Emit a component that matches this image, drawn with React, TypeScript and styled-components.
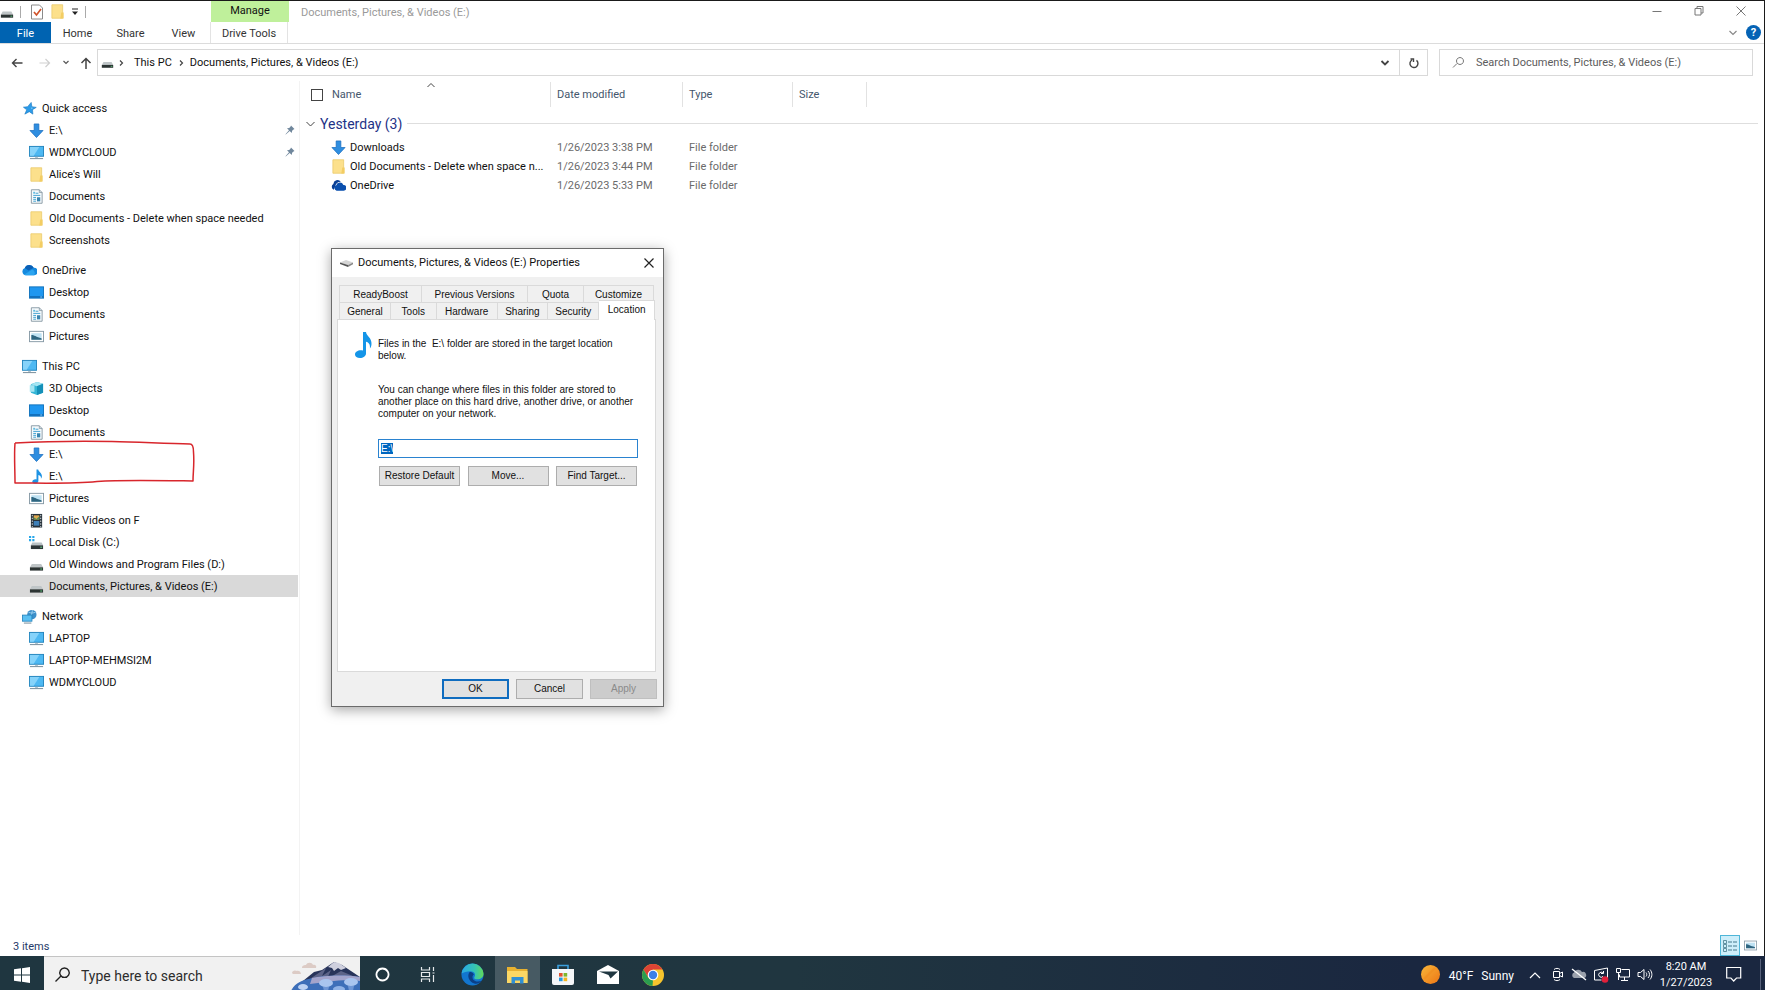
import React, { useEffect, useRef } from "react";
import styled, { createGlobalStyle, css } from "styled-components";

const GlobalStyle = createGlobalStyle`
  *, *::before, *::after { box-sizing: border-box; }
  html, body { margin: 0; height: 100%; }
  body { background: #fff; font: 11px/16px Roboto, "Open Sans", sans-serif; color: #111; overflow: hidden; }
  button, input { font: inherit; color: inherit; margin: 0; }
  button { border: 0; padding: 0; background: none; cursor: default; }
  svg { display: block; flex: none; }
  a { color: inherit; text-decoration: none; cursor: default; }
`;

/* ---------- icons ---------- */

type IconName =
  | "star" | "down" | "pc" | "folder" | "doc" | "cloud" | "cloudDark" | "desktop" | "picture"
  | "cube" | "note" | "film" | "osdrive" | "drive" | "network";

const shapes: Record<IconName, React.ReactNode> = {
  star: (
    <>
      <path d="M9.800 1.500 10.500 6l4.700.8-4 2.400.4 4.800-3.800-2.600L3 14l2-4.600-3.500-2.800 4.500-.6z" fill="#2c9be8" stroke="#1273bd" strokeWidth=".6" />
      <path d="m9 4.500.6 2.500 2.700.5-2.500 1z" fill="#7cc8f7" />
    </>
  ),
  down: <path d="M5.500 1h5v7H15l-7 7.500L1 8h4.500z" fill="#2f8ee0" stroke="#1c6fc0" strokeWidth=".8" />,
  pc: (
    <>
      <rect x=".5" y="1.500" width="15" height="10.500" fill="#4db8f2" stroke="#2384bd" />
      <path d="M1 2h10L5 11.500H1z" fill="#86d3fa" />
      <path d="M6.500 12.500h3v1h-3z" fill="#8aa7b8" />
      <path d="M1 14.500h14" stroke="#6f8593" />
    </>
  ),
  folder: (
    <>
      <path d="M2 .8h11.500v14.400H2z" fill="#fce08c" stroke="#e9c868" strokeWidth=".8" />
      <path d="M12 9h2.500v6.500H11z" fill="#f3cd63" />
    </>
  ),
  doc: (
    <>
      <path d="M2.500.8h8.500l3 3v11.400H2.500z" fill="#f6fafc" stroke="#7c8f9b" strokeWidth=".9" />
      <path d="M11 .8v3h3" fill="none" stroke="#7c8f9b" strokeWidth=".8" />
      <path d="M7 4.500h3M4.500 6.800h7.500M4.500 9h3M4.500 11h3M4.500 13h3" stroke="#3a9fd0" />
      <path d="M8.500 8.800h3.500v4.400H8.500z" fill="#3a85b0" />
      <path d="M4.500 3h2v2h-2z" fill="#5fbbe0" />
    </>
  ),
  cloud: (
    <>
      <path d="M4 13a4 4 0 0 1-1-7.700A5.200 5.200 0 0 1 12.500 5a4 4 0 0 1 .5 8z" fill="#1589de" />
      <path d="M3 5.300A5.200 5.200 0 0 1 12.500 5L7 8z" fill="#0b5fb5" />
      <path d="M2 12.500 11 7a4 4 0 0 1 2 6H4z" fill="#2ba4ef" />
    </>
  ),
  cloudDark: (
    <>
      <path d="M3 12.500A3.300 3.300 0 0 1 2.500 6.500 4.500 4.500 0 0 1 10.500 4 6 6 0 0 0 4.500 9z" fill="#0a3f95" />
      <path d="M6 13.500a3 3 0 0 1-.4-5.700 4 4 0 0 1 7.600-.3 3 3 0 0 1 .3 6z" fill="#0a4fae" />
    </>
  ),
  desktop: (
    <>
      <rect x=".5" y="2" width="15" height="12" fill="#1f97f0" stroke="#1273bd" />
      <path d="M1 12h14v1.500H1z" fill="#0f65ad" />
      <path d="M12 12.300h2v1h-2z" fill="#8fd0ff" />
    </>
  ),
  picture: (
    <>
      <rect x=".5" y="2.500" width="15" height="11" fill="#fff" stroke="#8699a5" />
      <path d="M2.500 4.500h11v7h-11z" fill="#bfe2f3" />
      <path d="M2.500 11.500v-5c3 0 5 2 11 3.500v1.500z" fill="#2e6580" />
    </>
  ),
  cube: (
    <>
      <path d="M2 3.500 8.500 1 15 3v9.500L8.500 15 2 12.500z" fill="#35b6d6" />
      <path d="M2 3.500 8.500 1 15 3 8.500 5.500z" fill="#a5e5f2" />
      <path d="M8.500 5.500 15 3v9.500L8.500 15z" fill="#1590b8" />
      <path d="M.8 4.500h5v7h-5z" fill="#a5e5f2" />
    </>
  ),
  note: <path d="M8 .5h1.800c.3 2.600 4.200 3.600 4 7.500-.1 1-.6 1.800-1.100 2.400.5-2.300-.7-3.700-2.700-4.100v6.400c0 1.600-1.700 2.800-3.700 2.800-1.700 0-2.800-.8-2.800-2 0-1.500 1.600-2.600 3.400-2.600.4 0 .8 0 1.100.2z" fill="#1e93e4" />,
  film: (
    <>
      <path d="M2 1h12v14.500H2z" fill="#26313a" />
      <path d="M5 2.500h6V7H5z" fill="#e0a94f" />
      <path d="M5 8.500h6v5H5z" fill="#3d7fb8" />
      <path d="M5 7V4.500l3 2 3-3V7z" fill="#4f8c56" />
      <path d="M3.500 2v13M12.500 2v13" stroke="#dfe6ea" strokeDasharray="1.500 1.500" />
    </>
  ),
  osdrive: (
    <>
      <path d="M0 1h2.300v2.300H0zM3.500 1h2.300v2.300H3.500zM0 4.300h2.300v2.300H0zM3.500 4.300h2.300v2.300H3.500z" fill="#27a7ea" />
      <path d="M3.500 8h10l1.500 3H2z" fill="#b9c1c5" />
      <path d="M2 11h13v4H2z" fill="#2d3538" />
      <path d="M12 13h2" stroke="#6be08b" />
    </>
  ),
  drive: (
    <>
      <path d="M3 7.500h10L15 11H1z" fill="#bfc5c7" />
      <path d="M1 11h14v3.500H1z" fill="#2c3433" />
      <path d="M12 12.800h2" stroke="#5fd07f" />
    </>
  ),
  network: (
    <>
      <circle cx="10.500" cy="6" r="5" fill="#3d8fc9" />
      <path d="M7 3.500c3 1 5 1 7.500-.2M8 9.500c2-3 3-5 3-8.300" stroke="#a4d6f2" strokeWidth=".9" fill="none" />
      <rect x=".6" y="6.500" width="10" height="6.500" fill="#59bff2" stroke="#2384bd" strokeWidth=".9" />
      <path d="M2 15h8" stroke="#6f8593" />
    </>
  ),
};

const Icon = ({ name, size = 15 }: { name: IconName; size?: number }) => (
  <svg width={size} height={size} viewBox="0 0 16 16" aria-hidden="true">{shapes[name]}</svg>
);

const Stroke = ({ d, w = 12, h = 12, color = "#444", width = 1.2 }: { d: string; w?: number; h?: number; color?: string; width?: number }) => (
  <svg width={w} height={h} viewBox={`0 0 ${w} ${h}`} fill="none" stroke={color} strokeWidth={width} aria-hidden="true">
    <path d={d} />
  </svg>
);

const Pin = () => (
  <svg width="10" height="10" viewBox="0 0 10 10" aria-label="Pinned">
    <path d="M6 .5 9.500 4l-1 .4-1.400 1.400-.3 2.200L4.700 6 .8 9.500.5 9.200 4 5.300 2 3.200l2.200-.3L5.600 1.500z" fill="#70879c" />
  </svg>
);

/* ---------- window frame ---------- */

const Screen = styled.div`
  height: 100vh;
  display: flex;
  flex-direction: column;
`;

const ExplorerWindow = styled.main`
  position: relative;
  flex: 1;
  min-height: 0;
  display: flex;
  flex-direction: column;
  border-top: 1px solid #1a1a1a;
  border-right: 1px solid #1a1a1a;
`;

const TitleBar = styled.header`
  display: flex;
  height: 21px;
`;

const QuickTools = styled.div`
  width: 211px;
  display: flex;
  align-items: center;
  gap: 6px;
`;

const Divider = styled.span`
  width: 1px;
  height: 12px;
  background: #aaa;
`;

const QuickIcon = styled.svg`
  margin-left: 3px;
`;

const ContextTab = styled.div`
  width: 78px;
  background: #bff09b;
  text-align: center;
  line-height: 20px;
`;

const WindowTitle = styled.h1`
  flex: 1;
  margin: 0 0 0 12px;
  font: inherit;
  line-height: 23px;
  color: #9a9a9a;
`;

const CaptionButtons = styled.div`
  display: flex;
  padding: 0 2px 2px 0;
`;

const CaptionButton = styled.button`
  width: 42px;
  display: flex;
  align-items: center;
  justify-content: center;
`;

const Ribbon = styled.nav`
  display: flex;
  height: 22px;
  border-bottom: 1px solid #dcdcdc;
`;

const RibbonTab = styled.button<{ $kind?: "file" | "context" }>`
  width: 53px;
  padding-top: 2px;
  line-height: 19px;
  color: #333;
  ${({ $kind }) => $kind === "file" && css`
    width: 51px;
    color: #fff;
    background: #0063b1;
  `}
  ${({ $kind }) => $kind === "context" && css`
    width: 78px;
    border: solid #e3e3e3;
    border-width: 0 1px;
  `}
`;

const RibbonEnd = styled.div`
  margin-left: auto;
  display: flex;
  align-items: center;
  gap: 7px;
  padding-right: 3px;
`;

const HelpButton = styled.button`
  width: 15px;
  height: 15px;
  border-radius: 50%;
  background: #0563b5;
  color: #fff;
  font-weight: 700;
  line-height: 15px;
`;

const AddressRow = styled.div`
  display: flex;
  align-items: center;
  height: 37px;
  padding-right: 11px;
`;

const NavButton = styled.button<{ $w: number }>`
  width: ${({ $w }) => $w}px;
  height: 26px;
  display: flex;
  align-items: center;
  justify-content: center;
`;

const AddressBox = styled.div`
  flex: 1;
  display: flex;
  align-items: center;
  height: 27px;
  border: 1px solid #d9d9d9;
  margin-left: 2px;
  padding-left: 3px;
`;

const Crumb = styled.a`
  padding: 0 6px;
`;

const AddressButton = styled.button<{ $edge?: boolean }>`
  width: 28px;
  height: 100%;
  display: flex;
  align-items: center;
  justify-content: center;
  ${({ $edge }) => $edge && css`border-left: 1px solid #d9d9d9;`}
`;

const Spacer = styled.span`
  flex: 1;
`;

const SearchBox = styled.label`
  width: 314px;
  height: 27px;
  margin-left: 11px;
  padding-left: 12px;
  display: flex;
  align-items: center;
  gap: 11px;
  border: 1px solid #d9d9d9;
`;

const SearchInput = styled.input`
  flex: 1;
  min-width: 0;
  border: 0;
  padding: 0;
  outline: 0;
  background: none;
  &::placeholder { color: #5c5c5c; opacity: 1; }
`;

/* ---------- body ---------- */

const Body = styled.div`
  flex: 1;
  min-height: 0;
  display: flex;
`;

const Sidebar = styled.nav`
  position: relative;
  width: 300px;
  padding-top: 16px;
  border-right: 1px solid #f3f3f3;
`;

const TreeGroup = styled.section`
  margin-bottom: 8px;
`;

const TreeItem = styled.a<{ $root?: boolean; $selected?: boolean }>`
  display: flex;
  align-items: center;
  gap: 5px;
  height: 22px;
  margin-right: 1px;
  padding: 0 3px 0 ${({ $root }) => ($root ? 22 : 29)}px;
  background: ${({ $selected }) => ($selected ? "#d9d9d9" : "transparent")};
  white-space: nowrap;
`;

const TreeLabel = styled.span`
  flex: 1;
  padding-top: 2px;
`;

const Annotation = styled.svg`
  position: absolute;
  left: 12px;
  top: 358px;
  pointer-events: none;
`;

const FilePane = styled.section`
  flex: 1;
  min-width: 0;
  padding-right: 6px;
`;

const FileTable = styled.table`
  width: 100%;
  table-layout: fixed;
  border-collapse: collapse;
`;

const HeadCell = styled.th`
  position: relative;
  height: 28px;
  padding: 0 0 0 6px;
  text-align: left;
  font-weight: 400;
  color: #44566c;
  &::after {
    content: "";
    position: absolute;
    top: 1px;
    right: 0;
    height: 25px;
    border-right: 1px solid #e2e2e2;
  }
  &:first-child { padding-left: 11px; }
  &:last-child::after { display: none; }
`;

const CheckLabel = styled.label`
  display: flex;
  align-items: center;
  gap: 9px;
`;

const CheckBox = styled.input`
  appearance: none;
  width: 12px;
  height: 12px;
  border: 1px solid #444;
  background: #fff;
`;

const SortMark = styled.span`
  position: absolute;
  left: 127px;
  top: 1px;
`;

const GroupHead = styled.h2`
  display: flex;
  align-items: center;
  gap: 5px;
  height: 29px;
  margin: 0;
  padding-left: 6px;
  font: inherit;
  font-size: 14px;
  color: #1e3287;
  white-space: nowrap;
  &::after {
    content: "";
    flex: 1;
    border-top: 1px solid #dedede;
  }
`;

const PlainCell = styled.td`
  padding: 0;
`;

const Cell = styled.td`
  height: 19px;
  padding: 0 0 0 6px;
  color: #6a6a6a;
  white-space: nowrap;
`;

const NameCell = styled.div`
  display: flex;
  align-items: center;
  gap: 4px;
  padding-left: 25px;
  color: #111;
`;

const StatusBar = styled.footer`
  display: flex;
  align-items: stretch;
  height: 21px;
  padding: 0 4px 0 13px;
  color: #1f3a68;
  line-height: 23px;
`;

const ViewButton = styled.button<{ $on?: boolean }>`
  width: 20px;
  display: flex;
  align-items: center;
  justify-content: center;
  ${({ $on }) => $on && css`
    background: #cdeefa;
    border: 1px solid #4fb6d8;
  `}
`;

/* ---------- properties dialog ---------- */

const Dialog = styled.section`
  position: absolute;
  left: 331px;
  top: 247px;
  width: 333px;
  height: 459px;
  display: flex;
  flex-direction: column;
  border: 1px solid #6b6b6b;
  background: #f0f0f0;
  box-shadow: 0 3px 12px rgba(0, 0, 0, 0.35);
  font: 10px/12px "Liberation Sans", Arial, sans-serif;
`;

const DialogTitle = styled.header`
  display: flex;
  align-items: center;
  gap: 5px;
  height: 28px;
  padding: 0 8px;
  background: #fff;
  font: 11px/16px Roboto, "Open Sans", sans-serif;
`;

const DialogBody = styled.div`
  flex: 1;
  display: flex;
  flex-direction: column;
  padding: 8px 6px 7px 5px;
`;

const TabRow = styled.div`
  display: flex;
  height: 17px;
  padding: 0 2px;
`;

const DialogTab = styled.button<{ $w: number; $active?: boolean }>`
  width: ${({ $w }) => $w}px;
  padding-top: 2px;
  border: 1px solid #dadada;
  border-width: 1px 1px 0 0;
  &:first-child { border-left-width: 1px; }
  ${({ $active }) => $active && css`
    position: relative;
    height: 20px;
    margin-top: -2px;
    padding-bottom: 3px;
    background: #fff;
    z-index: 1;
  `}
`;

const TabPanel = styled.div`
  flex: 1;
  margin-right: 1px;
  padding: 12px 17px;
  border: 1px solid #dadada;
  background: #fff;
`;

const Intro = styled.div`
  display: flex;
  gap: 6px;
  margin-bottom: 22px;
`;

const Copy = styled.p`
  margin: 0;
`;

const IntroCopy = styled(Copy)`
  padding-top: 6px;
`;

const Indented = styled.div`
  padding-left: 23px;
`;

const PathInput = styled.input`
  width: 100%;
  height: 19px;
  margin: 19px 0 8px;
  padding: 0 2px;
  display: block;
  border: 1px solid #2a83d0;
  outline: 0;
  &::selection { background: #0067c0; color: #fff; }
`;

const ButtonRow = styled.div`
  display: flex;
  justify-content: space-between;
  padding: 0 1px;
`;

const FooterRow = styled.div`
  display: flex;
  justify-content: flex-end;
  gap: 7px;
  padding-top: 7px;
`;

const PushButton = styled.button<{ $w: number; $primary?: boolean }>`
  width: ${({ $w }) => $w}px;
  height: 20px;
  background: #e1e1e1;
  border: ${({ $primary }) => ($primary ? "2px solid #0f6cbf" : "1px solid #adadad")};
  &:disabled { background: #cccccc; border-color: #bfbfbf; color: #8a8a8a; }
`;

/* ---------- taskbar ---------- */

const Taskbar = styled.footer`
  display: flex;
  height: 34px;
  background: linear-gradient(90deg, #1f3640, #203640 45%, #1a2740 80%);
  color: #fff;
`;

const TaskButton = styled.button<{ $w?: number; $active?: boolean }>`
  width: ${({ $w = 45 }) => $w}px;
  padding-top: 3px;
  display: flex;
  align-items: center;
  justify-content: center;
  background: ${({ $active }) => ($active ? "#475a63" : "none")};
`;

const TaskSearch = styled.label`
  width: 316px;
  display: flex;
  align-items: center;
  gap: 10px;
  padding: 3px 0 0 11px;
  background: #f1f1f1;
  border-top: 1px solid #c4c4c4;
  color: #222;
  font-size: 14px;
  line-height: 20px;
`;

const TaskSearchInput = styled(SearchInput)`
  padding-top: 2px;
  &::placeholder { color: #2c2c2c; }
`;

const Tray = styled.div`
  margin-left: auto;
  padding-top: 3px;
  display: flex;
  align-items: center;
`;

const Weather = styled.button`
  display: flex;
  align-items: center;
  gap: 8px;
  margin-right: 10px;
  font-size: 12px;
  & > span { padding-top: 2px; }
`;

const WeatherIcon = styled.svg`
  margin-right: 1px;
`;

const TrayButton = styled.button`
  width: 22px;
  height: 30px;
  display: flex;
  align-items: center;
  justify-content: center;
`;

const Clock = styled.time`
  width: 60px;
  text-align: center;
  line-height: 16px;
`;

const Notifications = styled(TrayButton)`
  width: 36px;
  margin-right: 8px;
`;

const ShowDesktop = styled.button`
  width: 5px;
  height: 100%;
  border-left: 1px solid #56607a;
`;

/* ---------- data ---------- */

interface Node { label: string; icon: IconName; pinned?: boolean; selected?: boolean }

const tree: { root: Node; items: Node[] }[] = [
  {
    root: { label: "Quick access", icon: "star" },
    items: [
      { label: "E:\\", icon: "down", pinned: true },
      { label: "WDMYCLOUD", icon: "pc", pinned: true },
      { label: "Alice's Will", icon: "folder" },
      { label: "Documents", icon: "doc" },
      { label: "Old Documents - Delete when space needed", icon: "folder" },
      { label: "Screenshots", icon: "folder" },
    ],
  },
  {
    root: { label: "OneDrive", icon: "cloud" },
    items: [
      { label: "Desktop", icon: "desktop" },
      { label: "Documents", icon: "doc" },
      { label: "Pictures", icon: "picture" },
    ],
  },
  {
    root: { label: "This PC", icon: "pc" },
    items: [
      { label: "3D Objects", icon: "cube" },
      { label: "Desktop", icon: "desktop" },
      { label: "Documents", icon: "doc" },
      { label: "E:\\", icon: "down" },
      { label: "E:\\", icon: "note" },
      { label: "Pictures", icon: "picture" },
      { label: "Public Videos on F", icon: "film" },
      { label: "Local Disk (C:)", icon: "osdrive" },
      { label: "Old Windows and Program Files (D:)", icon: "drive" },
      { label: "Documents, Pictures, & Videos (E:)", icon: "drive", selected: true },
    ],
  },
  {
    root: { label: "Network", icon: "network" },
    items: [
      { label: "LAPTOP", icon: "pc" },
      { label: "LAPTOP-MEHMSI2M", icon: "pc" },
      { label: "WDMYCLOUD", icon: "pc" },
    ],
  },
];

const files: { name: string; icon: IconName; date: string }[] = [
  { name: "Downloads", icon: "down", date: "1/26/2023 3:38 PM" },
  { name: "Old Documents - Delete when space n...", icon: "folder", date: "1/26/2023 3:44 PM" },
  { name: "OneDrive", icon: "cloudDark", date: "1/26/2023 5:33 PM" },
];

/* ---------- parts ---------- */

const Explorer = () => (
  <>
    <TitleBar>
      <QuickTools>
        <Icon name="drive" size={14} />
        <Divider />
        <QuickIcon width="14" height="16" viewBox="0 0 14 16">
          <path d="M1.500 1h8l3 3v11h-11z" fill="#fff" stroke="#8a8a8a" />
          <path d="m4 8 2.500 3L11 5" fill="none" stroke="#d0532a" strokeWidth="1.700" />
        </QuickIcon>
        <Icon name="folder" />
        <svg width="8" height="8" viewBox="0 0 8 8"><path d="M1 1h6" stroke="#222" /><path d="M1 3.500h6L4 7z" fill="#222" /></svg>
        <Divider />
      </QuickTools>
      <ContextTab>Manage</ContextTab>
      <WindowTitle>Documents, Pictures, &amp; Videos (E:)</WindowTitle>
      <CaptionButtons>
        <CaptionButton aria-label="Minimize"><Stroke d="M1.500 6.500h9" color="#777" width={1} /></CaptionButton>
        <CaptionButton aria-label="Restore"><Stroke d="M2 3.500h6v6.500H2zM4 3.500v-2h6V8H8" color="#777" width={1} /></CaptionButton>
        <CaptionButton aria-label="Close"><Stroke d="m1.500 1.500 9 9m0-9-9 9" color="#777" width={1} /></CaptionButton>
      </CaptionButtons>
    </TitleBar>
    <Ribbon>
      <RibbonTab $kind="file">File</RibbonTab>
      <RibbonTab>Home</RibbonTab>
      <RibbonTab>Share</RibbonTab>
      <RibbonTab>View</RibbonTab>
      <RibbonTab $kind="context">Drive Tools</RibbonTab>
      <RibbonEnd>
        <Stroke d="m2.500 4 3.500 3.500L9.500 4" color="#888" />
        <HelpButton aria-label="Help">?</HelpButton>
      </RibbonEnd>
    </Ribbon>
    <AddressRow>
      <NavButton $w={34} aria-label="Back"><Stroke d="M11.500 6H1.500m4-4-4 4 4 4" width={1.400} /></NavButton>
      <NavButton $w={22} aria-label="Forward"><Stroke d="M.500 6h10m-4-4 4 4-4 4" color="#cfcfcf" /></NavButton>
      <NavButton $w={20} aria-label="Recent locations"><Stroke d="m1.500 2 2.500 2.500L6.500 2" w={8} h={7} color="#555" /></NavButton>
      <NavButton $w={19} aria-label="Up"><Stroke d="M6 12V1.500M1.500 6 6 1.500 10.500 6" width={1.500} /></NavButton>
      <AddressBox>
        <Icon name="drive" size={13} />
        <NavButton $w={14} aria-label="Expand"><Stroke d="m2 1.500 2.500 2.500L2 6.500" w={6} h={8} /></NavButton>
        <Crumb href="#">This PC</Crumb>
        <Stroke d="m2 1.500 2.500 2.500L2 6.500" w={6} h={8} />
        <Crumb href="#">Documents, Pictures, &amp; Videos (E:)</Crumb>
        <Spacer />
        <AddressButton aria-label="Previous locations"><Stroke d="M2.500 4 6 7.500 9.500 4" width={1.800} /></AddressButton>
        <AddressButton $edge aria-label="Refresh"><Stroke d="M4 3a4 4 0 1 0 4.500.4M2.500 2h3v3" width={1.400} /></AddressButton>
      </AddressBox>
      <SearchBox>
        <Stroke d="M1 11.500 5 7.500M8 1.500a3.500 3.500 0 1 1-.01 0z" w={13} h={13} color="#777" width={1} />
        <SearchInput aria-label="Search folder" placeholder="Search Documents, Pictures, & Videos (E:)" />
      </SearchBox>
    </AddressRow>
    <Body>
      <Sidebar>
        {tree.map(({ root, items }) => (
          <TreeGroup key={root.label}>
            <TreeItem href="#" $root><Icon name={root.icon} /><TreeLabel>{root.label}</TreeLabel></TreeItem>
            {items.map((n, i) => (
              <TreeItem href="#" key={i} $selected={n.selected}>
                <Icon name={n.icon} />
                <TreeLabel>{n.label}</TreeLabel>
                {n.pinned && <Pin />}
              </TreeItem>
            ))}
          </TreeGroup>
        ))}
        <Annotation width="184" height="48" viewBox="0 0 184 48" fill="none" stroke="#d8262c" strokeWidth="1.500" strokeLinejoin="round">
          <path d="M3 4C40 2 70 2 100 2.500 130 3 155 5 178 5c3 0 3.500 3 3.500 8 1 12-.5 20-.5 29-30-.5-70-1.500-96 .5C60 45 30 44 3 44 3 30 2 16 3 4" />
        </Annotation>
      </Sidebar>
      <FilePane>
        <FileTable>
          <colgroup>
            <col style={{ width: 251 }} /><col style={{ width: 132 }} /><col style={{ width: 110 }} /><col style={{ width: 74 }} /><col />
          </colgroup>
          <thead>
            <tr>
              <HeadCell>
                <CheckLabel><CheckBox type="checkbox" />Name</CheckLabel>
                <SortMark><Stroke d="M.500 5 4 1.500 7.500 5" w={8} h={6} width={1} /></SortMark>
              </HeadCell>
              <HeadCell>Date modified</HeadCell>
              <HeadCell>Type</HeadCell>
              <HeadCell>Size</HeadCell>
              <HeadCell as="td" />
            </tr>
          </thead>
          <tbody>
            <tr>
              <PlainCell colSpan={5}>
                <GroupHead><Stroke d="M.500 3 4.500 7l4-4" w={9} h={9} width={1} />Yesterday (3)</GroupHead>
              </PlainCell>
            </tr>
            {files.map((f) => (
              <tr key={f.name}>
                <Cell><NameCell><Icon name={f.icon} /><span>{f.name}</span></NameCell></Cell>
                <Cell>{f.date}</Cell>
                <Cell>File folder</Cell>
                <Cell />
                <Cell />
              </tr>
            ))}
          </tbody>
        </FileTable>
      </FilePane>
    </Body>
    <StatusBar>
      <span>3 items</span>
      <Spacer />
      <ViewButton $on aria-label="Details view">
        <svg width="16" height="14" viewBox="0 0 16 14" stroke="#45798c" fill="none">
          <path d="M1.500 1.500h3v3h-3zM1.500 5.500h3v3h-3zM1.500 9.500h3v3h-3z" strokeWidth=".8" />
          <path d="M6 3h4M11 3h4M6 7h4M11 7h4M6 11h4M11 11h4" />
        </svg>
      </ViewButton>
      <ViewButton aria-label="Large icons view"><Icon name="picture" size={13} /></ViewButton>
    </StatusBar>
  </>
);

const Properties = () => {
  const path = useRef<HTMLInputElement>(null);
  useEffect(() => {
    path.current?.focus();
    path.current?.select();
  }, []);
  return (
    <Dialog role="dialog" aria-label="Properties">
      <DialogTitle>
        <svg width="13" height="8" viewBox="0 0 13 8">
          <path d="M0 3.500 6 1l7 2.500L8 6z" fill="#d5d5d5" />
          <path d="M0 3.500 8 6v2L0 5z" fill="#555" />
          <path d="M8 6l5-2.500v1.800L8 8z" fill="#888" />
        </svg>
        <span>Documents, Pictures, &amp; Videos (E:) Properties</span>
        <Spacer />
        <button aria-label="Close"><Stroke d="m1.500 1.500 9 9m0-9-9 9" color="#222" /></button>
      </DialogTitle>
      <DialogBody>
        <TabRow role="tablist">
          <DialogTab $w={83} role="tab">ReadyBoost</DialogTab>
          <DialogTab $w={106} role="tab">Previous Versions</DialogTab>
          <DialogTab $w={56} role="tab">Quota</DialogTab>
          <DialogTab $w={70} role="tab">Customize</DialogTab>
        </TabRow>
        <TabRow role="tablist">
          <DialogTab $w={52} role="tab">General</DialogTab>
          <DialogTab $w={46} role="tab">Tools</DialogTab>
          <DialogTab $w={61} role="tab">Hardware</DialogTab>
          <DialogTab $w={51} role="tab">Sharing</DialogTab>
          <DialogTab $w={51} role="tab">Security</DialogTab>
          <DialogTab $w={56} $active role="tab" aria-selected="true">Location</DialogTab>
        </TabRow>
        <TabPanel role="tabpanel">
          <Intro>
            <svg width="17" height="27" viewBox="0 0 17 27">
              <path d="M8 0h3c.4 4 6 6 5.500 12-.1 2-.8 3.500-1.600 4.500.5-4-1-6-3.900-6.800v11.800c0 2.700-2.800 4.500-6 4.500C2 26 0 24.700 0 22.600 0 20 2.700 18.300 5.800 18.300c.8 0 1.600.1 2.200.3z" fill="#1495e8" />
            </svg>
            <IntroCopy>Files in the&nbsp; E:\ folder are stored in the target location<br />below.</IntroCopy>
          </Intro>
          <Indented>
            <Copy>You can change where files in this folder are stored to<br />another place on this hard drive, another drive, or another<br />computer on your network.</Copy>
            <PathInput ref={path} aria-label="Folder location" defaultValue="E:\" />
            <ButtonRow>
              <PushButton $w={81}>Restore Default</PushButton>
              <PushButton $w={81}>Move...</PushButton>
              <PushButton $w={81}>Find Target...</PushButton>
            </ButtonRow>
          </Indented>
        </TabPanel>
        <FooterRow>
          <PushButton $w={67} $primary>OK</PushButton>
          <PushButton $w={67}>Cancel</PushButton>
          <PushButton $w={67} disabled>Apply</PushButton>
        </FooterRow>
      </DialogBody>
    </Dialog>
  );
};

const MountainArt = () => (
  <svg width="70" height="30" viewBox="0 0 70 30" aria-hidden="true">
    <path d="M2 13c0-2 3-3 4-2 2-1 5 0 5 3H3zM12 8c0-3 3-3 4-3 1-3 6-3 7 0 2-1 4 1 3 3z" fill="#dccbc5" />
    <path d="M8 25 24 12l8-2 12-8 8 3 18 12v14H4z" fill="#28345a" />
    <path d="M38 7l6-5 5 1 7 5-5 2-3-2-4 3-2-3z" fill="#cfd0de" />
    <path d="M14 23 36 8l-4 8 9-6-4 9 14-8 19 8v12H4z" fill="#5d6488" />
    <path d="M1 31c4-9 12-11 22-13 15-3 32-3 47-1v14z" fill="#3d6fb9" />
    <path d="M22 18c10-2 30-4 48-1v4c-16-3-32 1-50 3z" fill="#a3a4cb" />
    <ellipse cx="36" cy="23" rx="7" ry="4" fill="#a9c5ef" />
    <ellipse cx="61" cy="22" rx="7" ry="4" fill="#a9c5ef" />
    <ellipse cx="13" cy="27" rx="5" ry="3" fill="#bcd2f3" />
    <ellipse cx="49" cy="29" rx="6" ry="3" fill="#8fb2e6" />
    <path d="M33 27h6l-1 4h-4zM58 26h6l-1 5h-4z" fill="#6f97d6" />
  </svg>
);

const TaskbarPart = () => (
  <Taskbar>
    <TaskButton $w={44} aria-label="Start">
      <svg width="16" height="16" viewBox="0 0 16 16" fill="#fff"><path d="M0 2.300 7 1.300v6.200H0zM8 1.200 16 0v7.500H8zM0 8.500h7v6.200l-7-1zM8 8.500h8V16l-8-1.200z" /></svg>
    </TaskButton>
    <TaskSearch>
      <Stroke d="M.500 14.500 6 9M9.500 1a4.700 4.700 0 1 1-.01 0z" w={16} h={16} color="#222" width={1.400} />
      <TaskSearchInput aria-label="Search" placeholder="Type here to search" />
      <MountainArt />
    </TaskSearch>
    <TaskButton aria-label="Cortana"><Stroke d="M7.500 1.500a6 6 0 1 1-.01 0z" w={15} h={15} color="#fff" width={1.800} /></TaskButton>
    <TaskButton aria-label="Task view">
      <Stroke d="M1.500 0v3h8V0M1.500 15v-3h8v3M1.500 5.500h8v4h-8zM13.500 0v4M13.500 8v7M12.500 6h2" w={16} h={15} color="#e6eaec" width={1.200} />
    </TaskButton>
    <TaskButton aria-label="Edge">
      <svg width="23" height="23" viewBox="0 0 24 24">
        <defs>
          <linearGradient id="edgeTop" x1="0" x2="1"><stop offset="0" stopColor="#2aa8e4" /><stop offset=".6" stopColor="#35c4b4" /><stop offset="1" stopColor="#63d957" /></linearGradient>
        </defs>
        <circle cx="12" cy="12" r="11.500" fill="#1276cf" />
        <path d="M.6 11A11.500 11.500 0 0 1 23.500 11c.3 4-3 6-6.500 6-2.500 0-4-1-3-2.500 2-3-.5-6-4-6-4 0-7.500 1-9.400 2.500z" fill="url(#edgeTop)" />
        <path d="M9 9.500C6 13 8 20 14 21.500c3 .7 6-.7 7.500-3-5 2-9.500 0-9.500-4 0-1 .4-1.700 1.500-2.500-1-2-2.500-3-4.500-2.500z" fill="#0b3f86" />
      </svg>
    </TaskButton>
    <TaskButton $active aria-label="File Explorer">
      <svg width="21" height="18" viewBox="0 0 21 18">
        <path d="M0 1h8l2 2h10.500v14H0z" fill="#e8b130" />
        <path d="M0 5h20.500v12H0z" fill="#fbd765" />
        <path d="M4.500 17.500v-6.500h12v6.500h-3.500v-3h-5v3z" fill="#3190d4" />
      </svg>
    </TaskButton>
    <TaskButton aria-label="Microsoft Store">
      <svg width="22" height="22" viewBox="0 0 22 22">
        <path d="M6 5.500V1.500h10v4" fill="none" stroke="#3b9fdc" strokeWidth="1.600" />
        <path d="M0 5h22v14a2 2 0 0 1-2 2H2a2 2 0 0 1-2-2z" fill="#f4f6f8" />
        <path d="M7 9h3.600v3.600H7z" fill="#e2512c" /><path d="M11.600 9h3.600v3.600h-3.600z" fill="#7fb52c" />
        <path d="M7 13.600h3.600v3.600H7z" fill="#2898dd" /><path d="M11.600 13.600h3.600v3.600h-3.600z" fill="#f3b51d" />
      </svg>
    </TaskButton>
    <TaskButton aria-label="Mail">
      <svg width="22" height="19" viewBox="0 0 22 19">
        <path d="M0 6 11 0l11 6v13H0z" fill="#fff" />
        <path d="M2 6.500h19l-7.500 7-2-3.500z" fill="#1f3640" />
      </svg>
    </TaskButton>
    <TaskButton aria-label="Chrome">
      <svg width="22" height="22" viewBox="0 0 22 22">
        <circle cx="11" cy="11" r="11" fill="#f6c42d" />
        <path d="M1.500 5.500a11 11 0 0 1 19 0H11L6.300 13.700z" fill="#dc4335" />
        <path d="M1.500 5.500 6.300 13.700 11 16.500 10.500 22A11 11 0 0 1 1.500 5.500z" fill="#2a9d50" />
        <circle cx="11" cy="11" r="5.300" fill="#fff" /><circle cx="11" cy="11" r="4.200" fill="#3d7fe6" />
      </svg>
    </TaskButton>
    <Tray>
      <Weather>
        <WeatherIcon width="19" height="19" viewBox="0 0 19 19">
          <defs><linearGradient id="sun" x1="0" y1="0" x2="1" y2="1"><stop offset="0" stopColor="#f9b83a" /><stop offset="1" stopColor="#ec7414" /></linearGradient></defs>
          <circle cx="9.500" cy="9.500" r="9.500" fill="url(#sun)" />
          <path d="M3 14 14 3" stroke="#f08a1d" strokeWidth="2" opacity=".5" />
        </WeatherIcon>
        <span>40°F</span><span>Sunny</span>
      </Weather>
      <TrayButton aria-label="Show hidden icons"><Stroke d="M1 9l5-5 5 5" color="#fff" /></TrayButton>
      <TrayButton aria-label="Meet now">
        <Stroke d="M2.500 4.500h6v6h-6zM8.500 6.500l3-1.500v5l-3-1.500M3 2.500c1.500-1.500 4.500-1.500 6 0M3 12.500c1.500 1.500 4.500 1.500 6 0" w={13} h={15} color="#fff" width={1} />
      </TrayButton>
      <TrayButton aria-label="OneDrive offline">
        <svg width="16" height="13" viewBox="0 0 16 13"><path d="M3 10a3 3 0 0 1 0-5.500 4.500 4.500 0 0 1 8-.5 3 3 0 0 1 2 6z" fill="#9ba1ac" /><path d="M1 1l14 11" stroke="#fff" strokeWidth="1.300" /></svg>
      </TrayButton>
      <TrayButton aria-label="Sync status">
        <svg width="16" height="16" viewBox="0 0 16 16" fill="none" stroke="#fff">
          <path d="M1.500 3.500 14.500 1v10M1.500 3.500v9.500h7" /><path d="M10 6a2.500 2.500 0 1 0 0 3.500M10.500 4v2.500H8" />
          <circle cx="12" cy="12.500" r="3.300" fill="#e2203a" stroke="none" />
        </svg>
      </TrayButton>
      <TrayButton aria-label="Network">
        <Stroke d="M6.500 2.500h8v7.500h-10V7.500M1.500 1.500h4v4h-4zM3.500 5.500V13M9.500 10v3M6 13.500h7" w={16} h={15} color="#fff" width={1} />
      </TrayButton>
      <TrayButton aria-label="Volume">
        <Stroke d="M1 5.500h2.500L7 2.500v10L3.500 9.500H1zM9 5.500c1 1 1 3 0 4M11 4c2 2 2 5 0 7M13 2.500c2.500 3 2.500 7 0 10" w={16} h={15} color="#fff" width={1} />
      </TrayButton>
      <Clock>8:20 AM<br />1/27/2023</Clock>
      <Notifications aria-label="Notifications">
        <Stroke d="M.700 1.500h14v10.500H10.500L7.700 15l-2.800-3H.700z" w={16} h={17} color="#fff" />
      </Notifications>
      <ShowDesktop aria-label="Show desktop" />
    </Tray>
  </Taskbar>
);

export default function App() {
  return (
    <Screen>
      <GlobalStyle />
      <ExplorerWindow>
        <Explorer />
        <Properties />
      </ExplorerWindow>
      <TaskbarPart />
    </Screen>
  );
}
